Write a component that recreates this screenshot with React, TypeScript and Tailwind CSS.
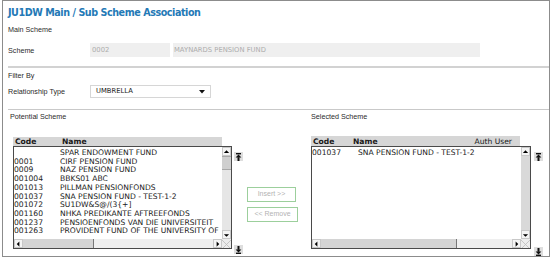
import React from "react";

const potential: [string, string][] = [
  ["", "SPAR ENDOWMENT FUND"],
  ["0001", "CIRF PENSION FUND"],
  ["0009", "NAZ PENSION FUND"],
  ["001004", "BBKS01 ABC"],
  ["001013", "PILLMAN PENSIONFONDS"],
  ["001037", "SNA PENSION FUND - TEST-1-2"],
  ["001072", "SU1DW&S@/(3{+]"],
  ["001160", "NHKA PREDIKANTE AFTREEFONDS"],
  ["001237", "PENSIOENFONDS VAN DIE UNIVERSITEIT"],
  ["001263", "PROVIDENT FUND OF THE UNIVERSITY OF"],
];

const selected: [string, string][] = [["001037", "SNA PENSION FUND - TEST-1-2"]];

function Tri({ dir }: { dir: "up" | "down" | "left" | "right" }) {
  const pts = {
    up: "1,5 4,2 7,5",
    down: "1,3 4,6 7,3",
    left: "5,1 2,4 5,7",
    right: "3,1 6,4 3,7",
  }[dir];
  return (
    <svg width="8" height="8" viewBox="0 0 8 8">
      <polygon points={pts} fill="#000" />
    </svg>
  );
}

function ArrowBtn({ dir }: { dir: "up" | "down" | "left" | "right" }) {
  return (
    <div className="w-[9px] h-[9px] bg-[#f4f4f4] border border-[#c8c8c8] flex items-center justify-center shrink-0">
      <Tri dir={dir} />
    </div>
  );
}

// move-to-top / move-to-bottom buttons beside the lists
function MoveIcon({ down }: { down?: boolean }) {
  return (
    <div className="w-[9px] h-[9px] bg-[#dedede] flex items-center justify-center">
      <svg width="7" height="8" viewBox="0 0 7 8" className={down ? "rotate-180" : ""}>
        <rect x="1" y="0" width="5" height="1.4" fill="#111" />
        <polygon points="3.5,1.4 0.6,4.4 6.4,4.4" fill="#111" />
        <rect x="2.5" y="4.2" width="2" height="3.8" fill="#111" />
      </svg>
    </div>
  );
}

function Corner() {
  return (
    <div className="w-[9px] h-[9px] bg-[#ececec] shrink-0">
      <svg width="9" height="9" viewBox="0 0 9 9">
        <line x1="1" y1="9" x2="9" y2="1" stroke="#bbb" strokeWidth="0.8" />
        <line x1="0" y1="1" x2="8" y2="9" stroke="#bbb" strokeWidth="0.8" />
      </svg>
    </div>
  );
}

function ListBox({
  rows,
  width,
  thumb,
  hThumb,
}: {
  rows: [string, string][];
  width: string;
  thumb: boolean;
  hThumb: string;
}) {
  return (
    <div className={`${width} h-[103px] border border-[#4a4a4a] bg-white flex flex-col`}>
      <div className="flex flex-1 min-h-0">
        <div className="flex-1 overflow-hidden pt-[2px] font-['DejaVu_Sans',sans-serif] text-[7.6px] leading-[8.7px] text-[#1a1a1a]">
          {rows.map(([code, name], i) => (
            <div key={i} className="flex whitespace-nowrap">
              <span className="w-[46px] shrink-0">{code}</span>
              <span>{name}</span>
            </div>
          ))}
        </div>
        <div className="w-[9px] flex flex-col bg-[#e6e6e6]">
          <ArrowBtn dir="up" />
          {thumb ? (
            <>
              <div className="h-[14px] bg-[#cfcfcf] border-y border-[#a8a8a8]" />
              <div className="flex-1" />
            </>
          ) : (
            <div className="flex-1 bg-[#d9d9d9]" />
          )}
          <ArrowBtn dir="down" />
        </div>
      </div>
      <div className="h-[9px] flex">
        <ArrowBtn dir="left" />
        <div className="flex-1 flex bg-[#efefef]">
          <div className={`${hThumb} bg-[#d4d4d4] border-r border-[#777]`} />
        </div>
        <ArrowBtn dir="right" />
        <Corner />
      </div>
    </div>
  );
}

export default function App() {
  const label = "font-['Liberation_Sans',Arial,sans-serif] text-[7.2px] leading-[9px] text-[#2a2a2a]";
  const head = "font-['DejaVu_Sans',sans-serif] text-[7.6px] leading-[9px] font-bold text-[#1a1a1a]";

  return (
    <div className="w-[553px] h-[260px] bg-white pl-[2px]">
      <div className="w-[548px] h-[257px] border border-[#8c8c8c] flex flex-col">
        <div className="pl-[5px] pt-[6px] font-['DejaVu_Sans',sans-serif] font-bold text-[9.6px] leading-[12px] tracking-[-0.45px] text-[#2479b6]">
          JU1DW Main / Sub Scheme Association
        </div>

        <div className={`${label} mt-[6px] pl-[5px]`}>Main Scheme</div>

        <div className="mt-[9px] pl-[5px] flex items-center h-[14px]">
          <div className={`${label} w-[82px]`}>Scheme</div>
          <div className="w-[80px] h-[14px] bg-[#efefef] flex items-center pl-[2px] font-['DejaVu_Sans',sans-serif] text-[6.8px] text-[#adadad]">
            0002
          </div>
          <div className="ml-[3px] w-[307px] h-[14px] bg-[#efefef] flex items-center pl-[1px] font-['DejaVu_Sans',sans-serif] text-[6.8px] text-[#adadad]">
            MAYNARDS PENSION FUND
          </div>
        </div>

        <div className="mt-[9px] ml-[5px] h-[2px] bg-[#d2d2d2]" />

        <div className={`${label} mt-[3px] pl-[5px]`}>Filter By</div>

        <div className="mt-[5px] pl-[5px] flex items-center h-[13px]">
          <div className={`${label} w-[82px]`}>Relationship Type</div>
          <div className="w-[121px] h-[13px] border border-[#d6d6d6] bg-white flex items-center justify-between pl-[5px] pr-[5px] font-['DejaVu_Sans',sans-serif] text-[6.8px] text-[#222]">
            <span>UMBRELLA</span>
            <svg width="6" height="4" viewBox="0 0 6 4">
              <polygon points="0,0 6,0 3,3.5" fill="#111" />
            </svg>
          </div>
        </div>

        <div className="mt-[11px] ml-[5px] h-px bg-[#c9c9c9]" />

        <div className="flex mt-[2px]">
          {/* potential scheme */}
          <div className="ml-[7px] flex flex-col">
            <div className={label}>Potential Scheme</div>
            <div className="mt-[16px] ml-[3px] flex">
              <div className="flex flex-col">
                <div className={`w-[209px] h-[9px] bg-[#d6d6d6] flex ${head}`}>
                  <span className="w-[49px] pl-[2px]">Code</span>
                  <span>Name</span>
                </div>
                <ListBox rows={potential} width="w-[219px]" thumb hThumb="w-[71px]" />
              </div>
              <div className="ml-[2px] flex flex-col">
                <div className="mt-[15px]">
                  <MoveIcon />
                </div>
                <div className="mt-[84px]">
                  <MoveIcon down />
                </div>
              </div>
            </div>
          </div>

          {/* buttons */}
          <div className="ml-[4px] pt-[75px] flex flex-col gap-[5px] font-['Liberation_Sans',Arial,sans-serif] text-[7px] text-[#b3b3b3]">
            <div className="w-[49px] h-[15px] border border-[#9ccf9c] bg-white flex items-center justify-center">
              Insert &gt;&gt;
            </div>
            <div className="w-[51px] h-[15px] border border-[#9ccf9c] bg-white flex items-center justify-center">
              &lt;&lt; Remove
            </div>
          </div>

          {/* selected scheme */}
          <div className="ml-[13px] flex flex-col">
            <div className={label}>Selected Scheme</div>
            <div className="mt-[15px] flex">
              <div className="flex flex-col">
                <div className={`w-[209px] h-[10px] bg-[#d6d6d6] flex items-center ${head}`}>
                  <span className="w-[42px] pl-[2px]">Code</span>
                  <span className="flex-1">Name</span>
                  <span className="pr-[8px] font-normal">Auth User</span>
                </div>
                <ListBox rows={selected} width="w-[220px]" thumb={false} hThumb="w-[136px]" />
              </div>
              <div className="ml-[3px] flex flex-col">
                <div className="mt-[16px]">
                  <MoveIcon />
                </div>
                <div className="mt-[86px]">
                  <MoveIcon down />
                </div>
              </div>
            </div>
          </div>
        </div>
      </div>
    </div>
  );
}
